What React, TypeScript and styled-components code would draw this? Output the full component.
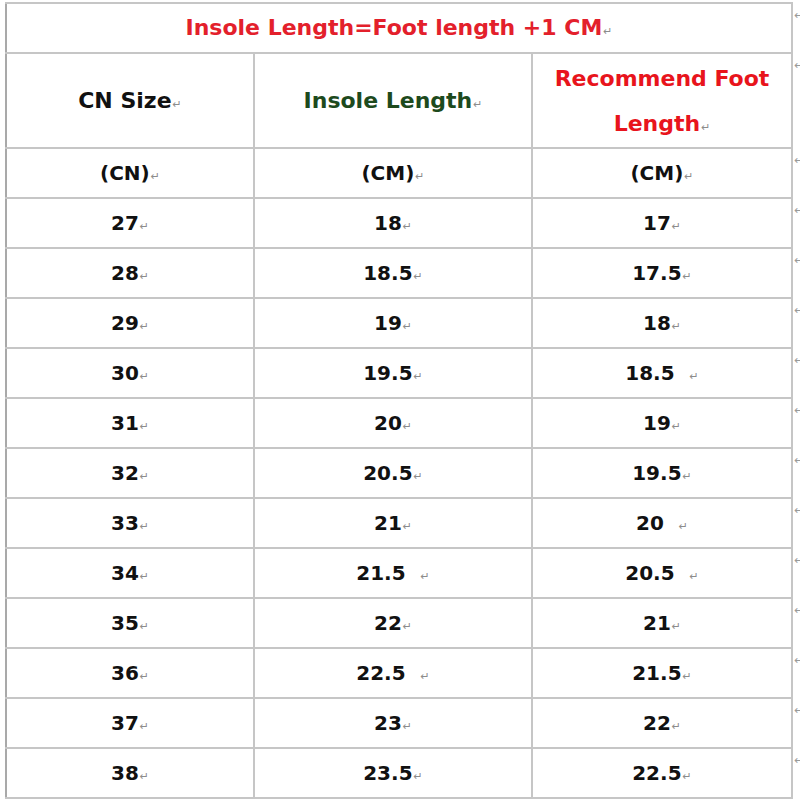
import React from "react";
import styled, { createGlobalStyle } from "styled-components";

const Global = createGlobalStyle`
  html, body { margin: 0; padding: 0; background: #ffffff; }
  body { font-family: "DejaVu Sans", "Liberation Sans", sans-serif; }
`;

const Page = styled.div`
  width: 800px;
  height: 800px;
  padding: 2px 0 0 5px;
  box-sizing: border-box;
  overflow: hidden;
  background: #fff;
`;

const Table = styled.table`
  border-collapse: collapse;
  table-layout: fixed;
  width: 795px;
`;

const Row = styled.tr<{ $h: number }>`
  height: ${(p) => p.$h}px;
`;

const Cell = styled.td<{ $color?: string; $size?: number; $lh?: number }>`
  border: 2px solid #c6c6c6;
  text-align: center;
  vertical-align: middle;
  padding: 0 4px;
  font-weight: bold;
  font-size: ${(p) => p.$size ?? 20}px;
  line-height: ${(p) => p.$lh ?? 24}px;
  color: ${(p) => p.$color ?? "#111111"};
  white-space: pre-wrap;
  &:first-child { border-left: 2px solid #a9a9a9; }
`;

const Margin = styled.td`
  border: none;
  border-left: 2px solid #bdbdbd;
  padding: 0;
  vertical-align: top;
  overflow: hidden;
`;

const MarginMark = styled.span`
  display: block;
  margin-top: 4px;
  margin-left: 1px;
  font-size: 12px;
  line-height: 16px;
  font-weight: normal;
  color: #9a9a9a;
`;

const Ret = styled.span`
  font-size: 11px;
  line-height: 0;
  font-weight: normal;
  color: #8c8c8c;
  margin-left: 1px;
`;

type R = [string, string, string];

const rows: R[] = [
  ["27", "18", "17"],
  ["28", "18.5", "17.5"],
  ["29", "19", "18"],
  ["30", "19.5", "18.5  "],
  ["31", "20", "19"],
  ["32", "20.5", "19.5"],
  ["33", "21", "20  "],
  ["34", "21.5  ", "20.5  "],
  ["35", "22", "21"],
  ["36", "22.5  ", "21.5"],
  ["37", "23", "22"],
  ["38", "23.5", "22.5"],
];

const Text: React.FC<{ t: string }> = ({ t }) => (
  <>
    {t}
    <Ret>↵</Ret>
  </>
);

const Mark = () => (
  <Margin>
    <MarginMark>↵</MarginMark>
  </Margin>
);

export default function App() {
  return (
    <Page>
      <Global />
      <Table>
        <colgroup>
          <col style={{ width: 248 }} />
          <col style={{ width: 278 }} />
          <col style={{ width: 260 }} />
          <col style={{ width: 9 }} />
        </colgroup>
        <tbody>
          <Row $h={50}>
            <Cell colSpan={3} $color="#e3202b" $size={22}>
              <Text t="Insole Length=Foot length +1 CM" />
            </Cell>
            <Mark />
          </Row>
          <Row $h={95}>
            <Cell $size={22}>
              <Text t="CN Size" />
            </Cell>
            <Cell $size={22} $color="#1d4a1d">
              <Text t="Insole Length" />
            </Cell>
            <Cell $size={22} $lh={45} $color="#e8141c">
              <Text t="Recommend Foot Length" />
            </Cell>
            <Mark />
          </Row>
          <Row $h={50}>
            <Cell>
              <Text t="(CN)" />
            </Cell>
            <Cell>
              <Text t="(CM)" />
            </Cell>
            <Cell>
              <Text t="(CM)" />
            </Cell>
            <Mark />
          </Row>
          {rows.map((r) => (
            <Row $h={50} key={r[0]}>
              <Cell>
                <Text t={r[0]} />
              </Cell>
              <Cell>
                <Text t={r[1]} />
              </Cell>
              <Cell>
                <Text t={r[2]} />
              </Cell>
              <Mark />
            </Row>
          ))}
        </tbody>
      </Table>
    </Page>
  );
}
